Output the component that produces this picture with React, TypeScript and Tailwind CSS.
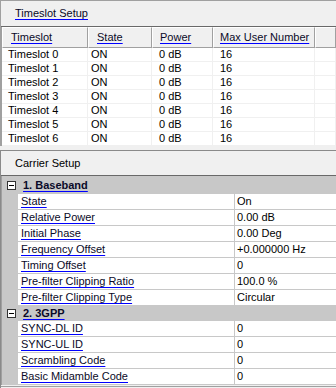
import React from "react";

const font = { fontFamily: '"Liberation Sans", Arial, sans-serif' };

const cols = [
  { name: "Timeslot", w: 86, hp: 8, dp: 6 },
  { name: "State", w: 64, hp: 8, dp: 3 },
  { name: "Power", w: 61, hp: 7, dp: 7 },
  { name: "Max User Number", w: 102, hp: 6, dp: 7 },
];

const rows = Array.from({ length: 7 }, (_, i) => [`Timeslot ${i}`, "ON", "0 dB", "16"]);

function Link({ children, bold }: { children: React.ReactNode; bold?: boolean }) {
  return (
    <span
      className={`underline decoration-[#0000ff] underline-offset-[2px] text-[#0a0a28] ${bold ? "font-bold" : ""}`}
    >
      {children}
    </span>
  );
}

function Minus() {
  return (
    <svg width="9" height="9" viewBox="0 0 9 9" className="shrink-0">
      <rect x="0.5" y="0.5" width="8" height="8" fill="#ffffff" stroke="#333333" />
      <line x1="2" y1="4.5" x2="7" y2="4.5" stroke="#000000" />
    </svg>
  );
}

type Prop = [string, string];

function Category({ title, props, h }: { title: string; props: Prop[]; h: number }) {
  return (
    <div className="flex flex-col">
      <div className="flex items-center bg-[#c8c8c8] pl-[5px] gap-[7px]" style={{ height: h }}>
        <Minus />
        <Link bold>{title}</Link>
      </div>
      {props.map(([k, v]) => (
        <div key={k} className="h-[16px] flex bg-[#c8c8c8]">
          <div className="w-[16px] shrink-0" />
          <div className="flex-1 flex bg-white border-b border-[#c8c8c8]">
            <div className="w-[217px] shrink-0 pl-[3px] flex items-center border-r border-[#c8c8c8]">
              <Link>{k}</Link>
            </div>
            <div className="flex-1 pl-[2px] flex items-center text-black">{v}</div>
          </div>
        </div>
      ))}
    </div>
  );
}

export default function App() {
  return (
    <div className="w-[336px] h-[388px] bg-[#f0f0f0] text-[11px] leading-none overflow-hidden flex flex-col" style={font}>
      {/* Timeslot Setup */}
      <div className="flex flex-col border-t border-l border-[#a0a0a0]">
        <div className="h-[26px] flex items-center pl-[14px] border-b border-[#696969]">
          <Link>Timeslot Setup</Link>
        </div>
        <div className="flex flex-col bg-white border-l border-[#a0a0a0] h-[119px]">
          <div className="h-[21px] flex bg-[#f0f0f0]">
            {cols.map((c) => (
              <div
                key={c.name}
                className="h-full flex items-center border-t border-l border-white border-r border-b border-r-[#a0a0a0] border-b-[#a0a0a0]"
                style={{ width: c.w, paddingLeft: c.hp }}
              >
                <Link>{c.name}</Link>
              </div>
            ))}
            <div className="flex-1 h-full border-t border-l border-white border-r border-b border-r-[#a0a0a0] border-b-[#a0a0a0]" />
          </div>
          {rows.map((r) => (
            <div key={r[0]} className="h-[14px] flex border-b border-[#f0f0f0]">
              {r.map((cell, j) => (
                <div
                  key={j}
                  className="h-full flex items-center border-r border-[#f0f0f0] text-black"
                  style={{ width: cols[j].w, paddingLeft: cols[j].dp }}
                >
                  {cell}
                </div>
              ))}
              <div className="flex-1 h-full border-r border-[#f0f0f0]" />
            </div>
          ))}
        </div>
      </div>

      {/* Carrier Setup */}
      <div className="mt-[4px] flex flex-col flex-1 border-t border-l border-[#8a8a8a]">
        <div className="h-[25px] flex items-center pl-[14px] border-b border-[#696969] text-black">
          Carrier Setup
        </div>
        <div className="flex flex-col border-l border-[#a0a0a0]">
          <Category
            h={18}
            title="1. Baseband"
            props={[
              ["State", "On"],
              ["Relative Power", "0.00 dB"],
              ["Initial Phase", "0.00 Deg"],
              ["Frequency Offset", "+0.000000 Hz"],
              ["Timing Offset", "0"],
              ["Pre-filter Clipping Ratio", "100.0 %"],
              ["Pre-filter Clipping Type", "Circular"],
            ]}
          />
          <Category
            h={15}
            title="2. 3GPP"
            props={[
              ["SYNC-DL ID", "0"],
              ["SYNC-UL ID", "0"],
              ["Scrambling Code", "0"],
              ["Basic Midamble Code", "0"],
            ]}
          />
        </div>
        <div className="h-[1px] mt-[1px] bg-[#a0a0a0]" />
      </div>
    </div>
  );
}
